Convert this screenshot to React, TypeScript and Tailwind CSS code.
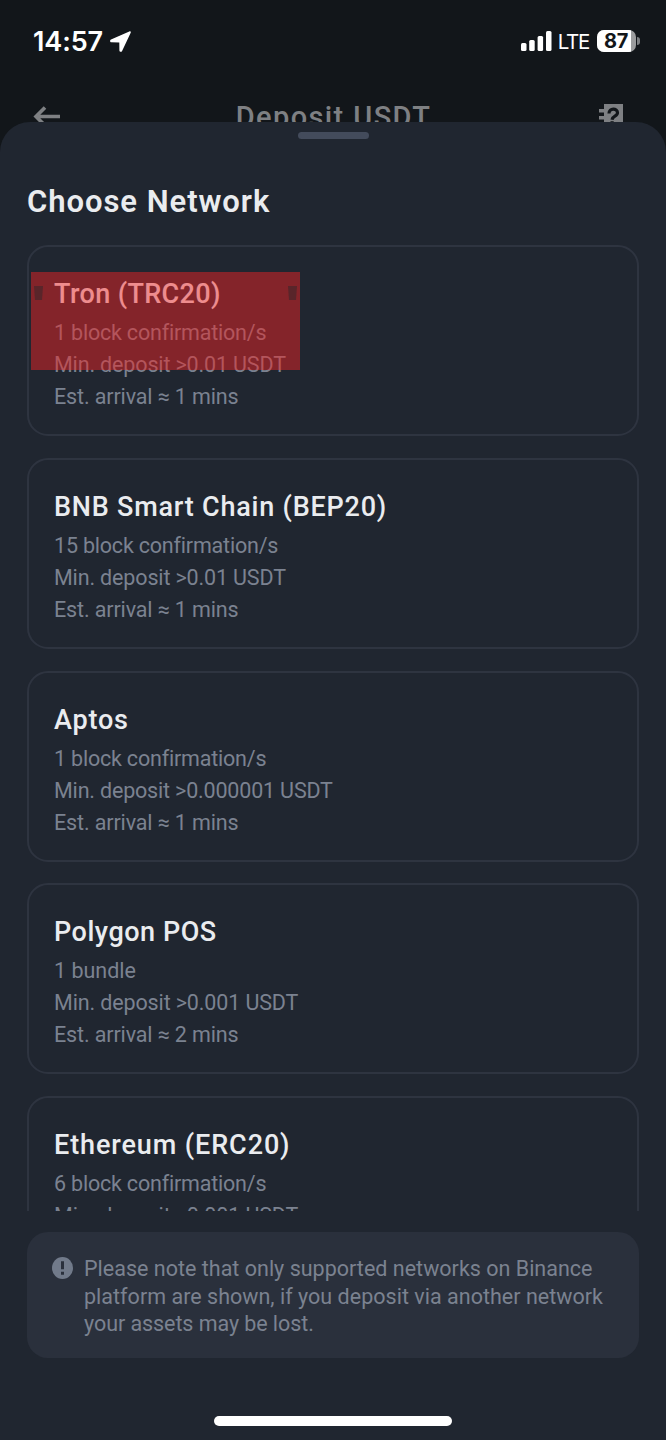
import clsx from "clsx";

interface Network {
  name: string;
  nameClass: string;
  details: { text: string; className: string }[];
}

const NETWORKS: Network[] = [
  {
    name: "Tron (TRC20)",
    nameClass: "tracking-[0.38px]",
    details: [
      { text: "1 block confirmation/s", className: "tracking-[-0.2px]" },
      { text: "Min. deposit >0.01 USDT", className: "tracking-[-0.15px]" },
      { text: "Est. arrival ≈ 1 mins", className: "tracking-[-0.13px]" },
    ],
  },
  {
    name: "BNB Smart Chain (BEP20)",
    nameClass: "tracking-[0.78px]",
    details: [
      { text: "15 block confirmation/s", className: "tracking-[-0.2px]" },
      { text: "Min. deposit >0.01 USDT", className: "tracking-[-0.15px]" },
      { text: "Est. arrival ≈ 1 mins", className: "tracking-[-0.13px]" },
    ],
  },
  {
    name: "Aptos",
    nameClass: "tracking-[0.8px]",
    details: [
      { text: "1 block confirmation/s", className: "tracking-[-0.2px]" },
      { text: "Min. deposit >0.000001 USDT", className: "tracking-[-0.18px]" },
      { text: "Est. arrival ≈ 1 mins", className: "tracking-[-0.13px]" },
    ],
  },
  {
    name: "Polygon POS",
    nameClass: "tracking-[0.53px]",
    details: [
      { text: "1 bundle", className: "tracking-normal" },
      { text: "Min. deposit >0.001 USDT", className: "tracking-[-0.13px]" },
      { text: "Est. arrival ≈ 2 mins", className: "tracking-[-0.13px]" },
    ],
  },
  {
    name: "Ethereum (ERC20)",
    nameClass: "tracking-[0.9px]",
    details: [
      { text: "6 block confirmation/s", className: "tracking-[-0.2px]" },
      { text: "Min. deposit >0.001 USDT", className: "tracking-[-0.13px]" },
    ],
  },
];

function StatusBar() {
  return (
    <div className="flex h-[82px] items-center justify-between pr-[26px] pl-[33px] font-['Inter',sans-serif] text-white">
      <div className="flex items-center gap-[7px]">
        <span className="pt-[2px] text-[27px] leading-[34px] font-semibold tracking-[-0.1px]">14:57</span>
        <svg width="21" height="21" viewBox="0 0 21 21" fill="currentColor">
          <path d="M19.300.4 1 8.600c-1.400.7-1.100 2.700.4 2.700l7.900.1.1 8c0 1.700 2.100 1.900 2.700.5L20.700 1.800C21.100.7 20.300 0 19.300.4Z" />
        </svg>
      </div>
      <div className="flex items-center">
        <svg width="31" height="20" viewBox="0 0 31 20" fill="currentColor">
          <rect x="0" y="12" width="5.500" height="8" rx="1.500" />
          <rect x="8.200" y="9" width="5.500" height="11" rx="1.500" />
          <rect x="16.600" y="5" width="5.500" height="15" rx="1.500" />
          <rect x="25" y="0" width="5.500" height="20" rx="1.500" />
        </svg>
        <span className="ml-[6px] pt-[2px] text-[20.500px] leading-[26px] tracking-[-1.3px]">LTE</span>
        <div className="ml-[8px] flex h-[22px] w-[39px] overflow-hidden rounded-[7px] bg-[#9b9c9e]">
          <div className="flex w-[34px] items-center justify-center bg-white pl-[4px] text-[20px] leading-[22px] font-bold tracking-[-0.3px] text-[#12161a]">
            87
          </div>
        </div>
        <div className="ml-px h-[8px] w-[3px] rounded-r-full bg-[#7d7f82]" />
      </div>
    </div>
  );
}

function PageHeader() {
  return (
    <div className="flex h-[70px] items-center justify-between pr-[43px] pl-[33px] text-[#7e8083]">
      <svg width="28" height="22" viewBox="0 0 28 22" fill="none" stroke="currentColor" strokeWidth="3.600">
        <path d="M27 10.500H3M12 1.500l-9 9 9 9" />
      </svg>
      <h1 className="pl-[7px] text-[29px] leading-[36px] font-medium tracking-[1.4px]">Deposit USDT</h1>
      <svg width="24" height="28" viewBox="0 0 24 28">
        <path
          fill="currentColor"
          d="M5 1h19v27H5v-5H0v-3.500h5v-3H0V13h5v-3.500H0V6h5Z"
        />
        <path
          d="M10 10.500c0-6 8.500-5.500 8.500-.8 0 3.800-5 3-5.500 7"
          fill="none"
          stroke="#12161a"
          strokeWidth="3.200"
        />
        <rect x="11.500" y="18.200" width="3.200" height="3" fill="#12161a" />
      </svg>
    </div>
  );
}

function NetworkCard({ network, highlighted }: { network: Network; highlighted: boolean }) {
  return (
    <li className="relative h-[191px] shrink-0 rounded-[21px] border-2 border-[#2e3440] pt-[30px] pl-[25px]">
      <p className={clsx("text-[27px] leading-[34px] font-medium text-[#eaecef]", network.nameClass)}>
        {network.name}
      </p>
      <div className="mt-[6px] text-[21.500px] leading-[32px] text-[#7b8290]">
        {network.details.map((detail) => (
          <p key={detail.text} className={detail.className}>
            {detail.text}
          </p>
        ))}
      </div>
      {highlighted && (
        <div className="absolute top-[25px] left-[2px] flex h-[98px] w-[269px] justify-between bg-[rgb(242,36,35)]/48 px-[3px] pt-[14px]">
          <Handle />
          <Handle />
        </div>
      )}
    </li>
  );
}

function Handle() {
  return (
    <svg width="9" height="14" viewBox="0 0 9 14">
      <path d="M0 0h9l-1 14H1Z" fill="#59252a" />
    </svg>
  );
}

function Notice() {
  return (
    <div className="mx-[27px] mt-[21px] flex h-[126px] rounded-[21px] bg-[#2a303c] pt-[23px] pl-[25px]">
      <svg className="mt-[2px] shrink-0" width="21" height="22" viewBox="0 0 21 22">
        <ellipse cx="10.500" cy="11" rx="10.500" ry="11" fill="#717a8a" />
        <path d="M9 4.200h3v8H9zM9 14.700h3v3H9z" fill="#2a303c" />
      </svg>
      <p className="ml-[11px] text-[21.500px] leading-[27.500px] text-[#7b8290]">
        <span className="block tracking-[0.01px]">Please note that only supported networks on Binance</span>
        <span className="block tracking-[0.02px]">platform are shown, if you deposit via another network</span>
        <span className="block tracking-[-0.07px]">your assets may be lost.</span>
      </p>
    </div>
  );
}

export default function App() {
  return (
    <div className="flex h-[1440px] w-[666px] flex-col overflow-hidden bg-[#12161a] font-['Roboto',sans-serif]">
      <div className="h-[121.500px] shrink-0 overflow-hidden">
        <StatusBar />
        <PageHeader />
      </div>
      <div className="flex flex-1 flex-col rounded-t-[30px] bg-[#202630]">
        <div className="mx-auto mt-[10px] h-[7px] w-[71px] shrink-0 rounded-full bg-[#434b5b]" />
        <h2 className="mt-[43px] ml-[27px] text-[31px] leading-[40px] font-semibold tracking-[0.95px] text-[#eaecef]">
          Choose Network
        </h2>
        <ul className="mt-[23.500px] flex h-[966px] shrink-0 flex-col gap-[21.800px] overflow-hidden px-[27px]">
          {NETWORKS.map((network, i) => (
            <NetworkCard key={network.name} network={network} highlighted={i === 0} />
          ))}
        </ul>
        <Notice />
        <div className="mx-auto mt-[58px] h-[10px] w-[238px] shrink-0 rounded-full bg-white" />
      </div>
    </div>
  );
}
